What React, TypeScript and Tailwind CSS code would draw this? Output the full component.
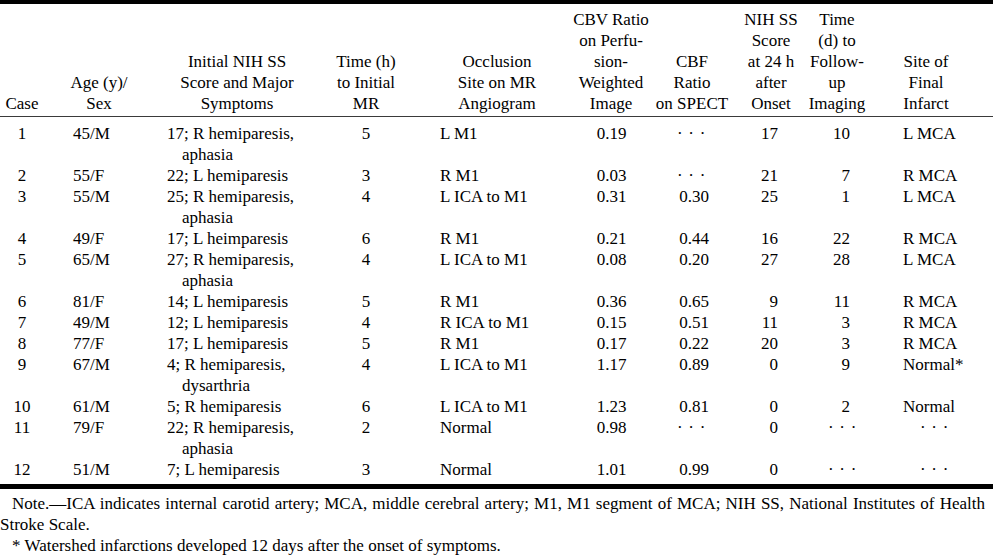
import React from "react";

const COLS = "grid grid-cols-[56px_104px_152px_108px_152px_78px_82px_72px_72px_117px]";

type Row = {
  c: string;
  age: string;
  sym: string[];
  t: string;
  occ: string;
  cbv: string;
  cbf: string;
  nih: string;
  fu: string;
  site: string;
};

const rows: Row[] = [
  { c: "1", age: "45/M", sym: ["17; R hemiparesis,", "aphasia"], t: "5", occ: "L M1", cbv: "0.19", cbf: "-", nih: "17", fu: "10", site: "L MCA" },
  { c: "2", age: "55/F", sym: ["22; L hemiparesis"], t: "3", occ: "R M1", cbv: "0.03", cbf: "-", nih: "21", fu: "7", site: "R MCA" },
  { c: "3", age: "55/M", sym: ["25; R hemiparesis,", "aphasia"], t: "4", occ: "L ICA to M1", cbv: "0.31", cbf: "0.30", nih: "25", fu: "1", site: "L MCA" },
  { c: "4", age: "49/F", sym: ["17; L heimparesis"], t: "6", occ: "R M1", cbv: "0.21", cbf: "0.44", nih: "16", fu: "22", site: "R MCA" },
  { c: "5", age: "65/M", sym: ["27; R hemiparesis,", "aphasia"], t: "4", occ: "L ICA to M1", cbv: "0.08", cbf: "0.20", nih: "27", fu: "28", site: "L MCA" },
  { c: "6", age: "81/F", sym: ["14; L hemiparesis"], t: "5", occ: "R M1", cbv: "0.36", cbf: "0.65", nih: "9", fu: "11", site: "R MCA" },
  { c: "7", age: "49/M", sym: ["12; L hemiparesis"], t: "4", occ: "R ICA to M1", cbv: "0.15", cbf: "0.51", nih: "11", fu: "3", site: "R MCA" },
  { c: "8", age: "77/F", sym: ["17; L hemiparesis"], t: "5", occ: "R M1", cbv: "0.17", cbf: "0.22", nih: "20", fu: "3", site: "R MCA" },
  { c: "9", age: "67/M", sym: ["4; R hemiparesis,", "dysarthria"], t: "4", occ: "L ICA to M1", cbv: "1.17", cbf: "0.89", nih: "0", fu: "9", site: "Normal*" },
  { c: "10", age: "61/M", sym: ["5; R hemiparesis"], t: "6", occ: "L ICA to M1", cbv: "1.23", cbf: "0.81", nih: "0", fu: "2", site: "Normal" },
  { c: "11", age: "79/F", sym: ["22; R hemiparesis,", "aphasia"], t: "2", occ: "Normal", cbv: "0.98", cbf: "-", nih: "0", fu: "-", site: "-" },
  { c: "12", age: "51/M", sym: ["7; L hemiparesis"], t: "3", occ: "Normal", cbv: "1.01", cbf: "0.99", nih: "0", fu: "-", site: "-" },
];

const Dots = () => <span className="tracking-[5.7px]">{"\u00B7\u00B7\u00B7"}</span>;

const headers: { lines: string[]; cls: string }[] = [
  { lines: ["Case"], cls: "pr-[12px]" },
  { lines: ["Age (y)/", "Sex"], cls: "pr-[18px]" },
  { lines: ["Initial NIH SS", "Score and Major", "Symptoms"], cls: "pl-[2px]" },
  { lines: ["Time (h)", "to Initial", "MR"], cls: "" },
  { lines: ["Occlusion", "Site on MR", "Angiogram"], cls: "pl-[2px]" },
  { lines: ["CBV Ratio", "on Perfu-", "sion-", "Weighted", "Image"], cls: "" },
  { lines: ["CBF", "Ratio", "on SPECT"], cls: "pl-[2px]" },
  { lines: ["NIH SS", "Score", "at 24 h", "after", "Onset"], cls: "pl-[6px]" },
  { lines: ["Time", "(d) to", "Follow-", "up", "Imaging"], cls: "pr-[6px]" },
  { lines: ["Site of", "Final", "Infarct"], cls: "pr-[17px]" },
];

export default function App() {
  return (
    <div
      className="w-[993px] h-[556px] bg-white text-black text-[17px] leading-[21px] overflow-hidden"
      style={{ fontFamily: '"Liberation Serif", "Times New Roman", serif' }}
    >
      <div className="border-t-4 border-black" />
      {/* header */}
      <div className={`${COLS} items-end pt-[5px] pb-[2px] border-b border-[#3a3a3a]`}>
        {headers.map((h, i) => (
          <div key={i} className={`flex flex-col items-center whitespace-nowrap ${h.cls}`}>
            {h.lines.map((l, j) => (
              <span key={j}>{l}</span>
            ))}
          </div>
        ))}
      </div>
      {/* body */}
      <div className="pt-[6px] pb-[4px] border-b-[5px] border-black">
        {rows.map((r) => (
          <div key={r.c} className={`${COLS} items-start whitespace-nowrap`}>
            <div className="text-center pr-[12px]">{r.c}</div>
            <div className="pl-[17px]">{r.age}</div>
            <div className="pl-[7px] flex flex-col">
              <span>{r.sym[0]}</span>
              {r.sym[1] && <span className="pl-[15px]">{r.sym[1]}</span>}
            </div>
            <div className="text-center">{r.t}</div>
            <div className="pl-[20px]">{r.occ}</div>
            <div className="text-center pl-[1px]">{r.cbv}</div>
            <div className="text-center pl-[6px]">{r.cbf === "-" ? <Dots /> : r.cbf}</div>
            <div className="text-right pr-[26px]">{r.nih}</div>
            <div className={r.fu === "-" ? "text-right pr-[14px]" : "text-right pr-[26px]"}>
              {r.fu === "-" ? <Dots /> : r.fu}
            </div>
            <div className={r.site === "-" ? "pl-[44px]" : "pl-[27px]"}>
              {r.site === "-" ? <Dots /> : r.site}
            </div>
          </div>
        ))}
      </div>
      {/* notes */}
      <div className="pt-[4px] pr-[8px]">
        <div className="pl-[12px] text-justify [text-align-last:justify] whitespace-nowrap">
          Note.—ICA indicates internal carotid artery; MCA, middle cerebral artery; M1, M1 segment of MCA; NIH SS, National Institutes of Health
        </div>
        <div>Stroke Scale.</div>
        <div className="pl-[12px]">* Watershed infarctions developed 12 days after the onset of symptoms.</div>
      </div>
    </div>
  );
}
